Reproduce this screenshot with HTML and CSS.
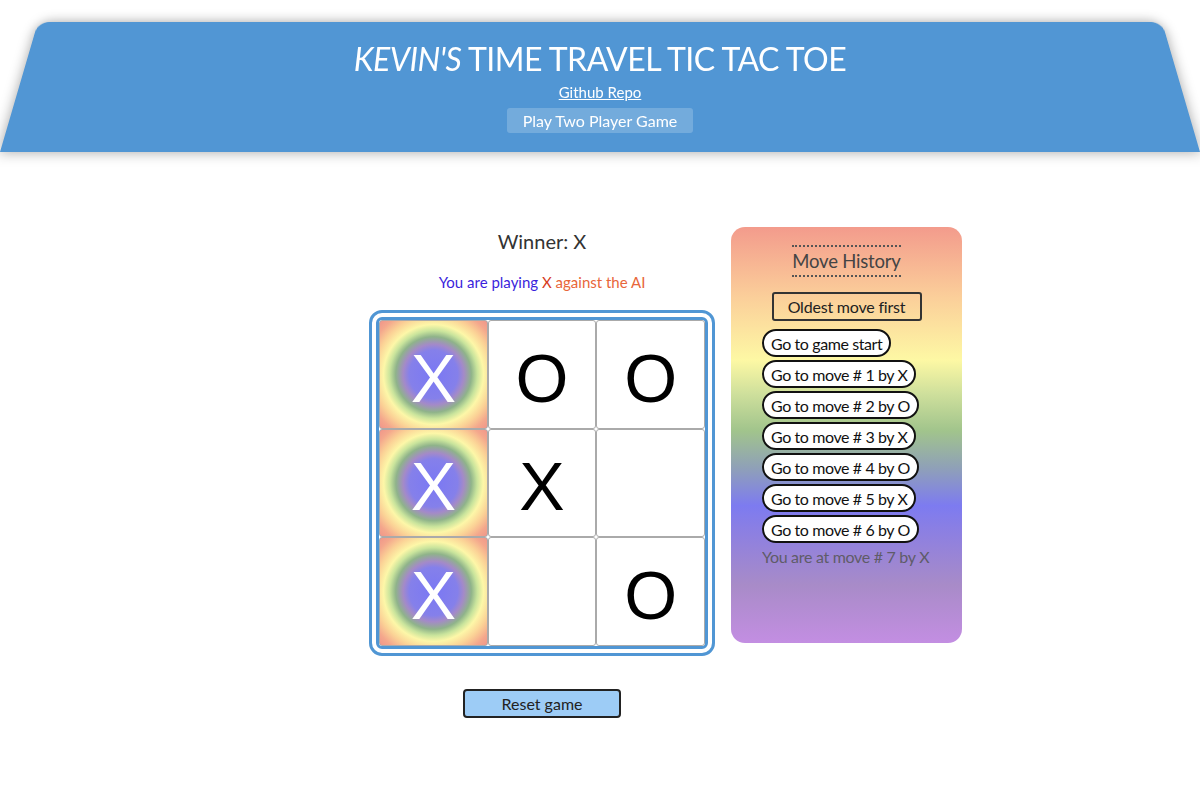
FILE: index.html
```html
<!DOCTYPE html>
<html>
<head>
  <title>Kevin's Time Travel Tic Tac Toe</title>
  <link rel="stylesheet" href="styles.css">
</head>
<body>
  <header class="header">
    <h1 class="title"><em>KEVIN'S</em> TIME TRAVEL TIC TAC TOE</h1>
    <a class="repo-link" href="#">Github Repo</a>
    <button class="mode-button">Play Two Player Game</button>
  </header>

  <div class="main">
    <div class="game">
      <div class="status">Winner: X</div>
      <div class="playing">
        <span class="you">You are playing</span>
        <span class="mark-x">X</span>
        <span class="ai">against the AI</span>
      </div>
      <div class="board">
        <button class="square win">X</button>
        <button class="square">O</button>
        <button class="square">O</button>
        <button class="square win">X</button>
        <button class="square">X</button>
        <button class="square"></button>
        <button class="square win">X</button>
        <button class="square"></button>
        <button class="square">O</button>
      </div>
      <button class="reset-button">Reset game</button>
    </div>

    <div class="history">
      <h2 class="history-title">Move History</h2>
      <button class="sort-button">Oldest move first</button>
      <ol class="moves">
        <li><button class="move-button">Go to game start</button></li>
        <li><button class="move-button">Go to move # 1 by X</button></li>
        <li><button class="move-button">Go to move # 2 by O</button></li>
        <li><button class="move-button">Go to move # 3 by X</button></li>
        <li><button class="move-button">Go to move # 4 by O</button></li>
        <li><button class="move-button">Go to move # 5 by X</button></li>
        <li><button class="move-button">Go to move # 6 by O</button></li>
        <li class="current">You are at move # 7 by X</li>
      </ol>
    </div>
  </div>
</body>
</html>
```

FILE: styles.css
```css
html, body {
  margin: 0;
  padding: 0;
}

body {
  font-family: Lato, "Open Sans", sans-serif;
  color: #333;
  background: #fff;
  overflow: hidden;
}

button {
  font-family: inherit;
  cursor: pointer;
}

.header {
  position: relative;
  margin-top: 22px;
  height: 130px;
  display: flex;
  flex-direction: column;
  align-items: center;
  z-index: 0;
}

.header::before {
  content: '';
  position: absolute;
  left: 0;
  right: 0;
  bottom: 0;
  height: 141px;
  background-color: #5196d4;
  border-radius: 12px 12px 0 0;
  transform-origin: 50% 100%;
  transform: perspective(362px) rotateX(10deg);
  box-shadow: 0 0 14px rgba(0, 0, 0, 0.35);
  z-index: -1;
}

.title {
  margin: 18px 0 0;
  font-size: 32px;
  font-weight: 400;
  color: #fff;
  line-height: 38px;
  letter-spacing: -0.5px;
}

.title em {
  font-style: italic;
}

.repo-link {
  margin-top: 4px;
  color: #fff;
  font-size: 15px;
  line-height: 20px;
}

.mode-button {
  margin-top: 6px;
  padding: 3px 16px;
  font-size: 16px;
  line-height: 19px;
  color: #fff;
  background-color: rgba(255, 255, 255, 0.2);
  border: none;
  border-radius: 3px;
}

.main {
  display: flex;
  justify-content: center;
  align-items: flex-start;
  gap: 16px;
  padding-left: 131px;
  margin-top: 75px;
}

.game {
  width: 346px;
  display: flex;
  flex-direction: column;
  align-items: center;
}

.status {
  margin-top: 2px;
  font-size: 20px;
  line-height: 24px;
}

.playing {
  margin-top: 19px;
  font-size: 15px;
  line-height: 20px;
}

.you {
  color: #3b1fdc;
}

.mark-x {
  color: #d63a1c;
}

.ai {
  color: #e8663a;
}

.board {
  margin-top: 18px;
  width: 346px;
  height: 346px;
  box-sizing: border-box;
  padding: 0;
  border: 10px double #5096d4;
  border-radius: 13px;
  display: grid;
  grid-template-columns: repeat(3, 1fr);
  grid-template-rows: repeat(3, 1fr);
}

.square {
  margin: 0;
  padding: 7px 0 0;
  background: #fff;
  border: 1px solid #aaa;
  border-radius: 3px;
  font-family: "Liberation Sans", Arial, sans-serif;
  font-size: 68px;
  line-height: 1;
  color: #000;
}

.square.win {
  color: #fff;
  background: radial-gradient(circle at center,
    #7a78f4 0%,
    #8580ea 32%,
    #a48ac8 40%,
    #8fb38a 50%,
    #c9e49c 58%,
    #fdf7a8 66%,
    #fbd296 78%,
    #f4a78c 90%,
    #f0968a 100%);
}

.reset-button {
  margin-top: 33px;
  width: 158px;
  height: 29px;
  padding: 0;
  font-size: 16px;
  color: #222;
  background-color: #9dccf6;
  border: 2px solid #222;
  border-radius: 4px;
}

.history {
  width: 231px;
  height: 416px;
  box-sizing: border-box;
  padding-top: 18px;
  border-radius: 14px;
  display: flex;
  flex-direction: column;
  align-items: center;
  background: linear-gradient(to bottom,
    #f39b8c 0%,
    #fbcf9a 17%,
    #fdf8a4 32%,
    #cfe09c 40%,
    #a1c48c 49%,
    #8fa0b8 58%,
    #7d7bf0 67%,
    #8e80e0 74%,
    #a88bc8 86%,
    #c38ee2 100%);
}

.history-title {
  margin: 0;
  padding: 2px 0;
  font-size: 18.5px;
  font-weight: 400;
  line-height: 24px;
  color: #444;
  letter-spacing: -0.2px;
  border-top: 2px dotted #555;
  border-bottom: 2px dotted #555;
}

.sort-button {
  margin-top: 15px;
  width: 150px;
  height: 29px;
  padding: 0;
  font-size: 16px;
  letter-spacing: -0.2px;
  color: #222;
  background: transparent;
  border: 2px solid #333;
  border-radius: 3px;
}

.moves {
  list-style: none;
  margin: 8px 0 0;
  padding: 0 0 0 31px;
  align-self: stretch;
  display: flex;
  flex-direction: column;
  gap: 3px;
}

.move-button {
  height: 28px;
  padding: 0 7px;
  font-size: 16px;
  letter-spacing: -0.4px;
  color: #111;
  background: #fff;
  border: 2px solid #111;
  border-radius: 14px;
}

.current {
  font-size: 16px;
  line-height: 20px;
  letter-spacing: -0.3px;
  color: #555;
  opacity: 0.85;
  margin-top: 1px;
}
```
